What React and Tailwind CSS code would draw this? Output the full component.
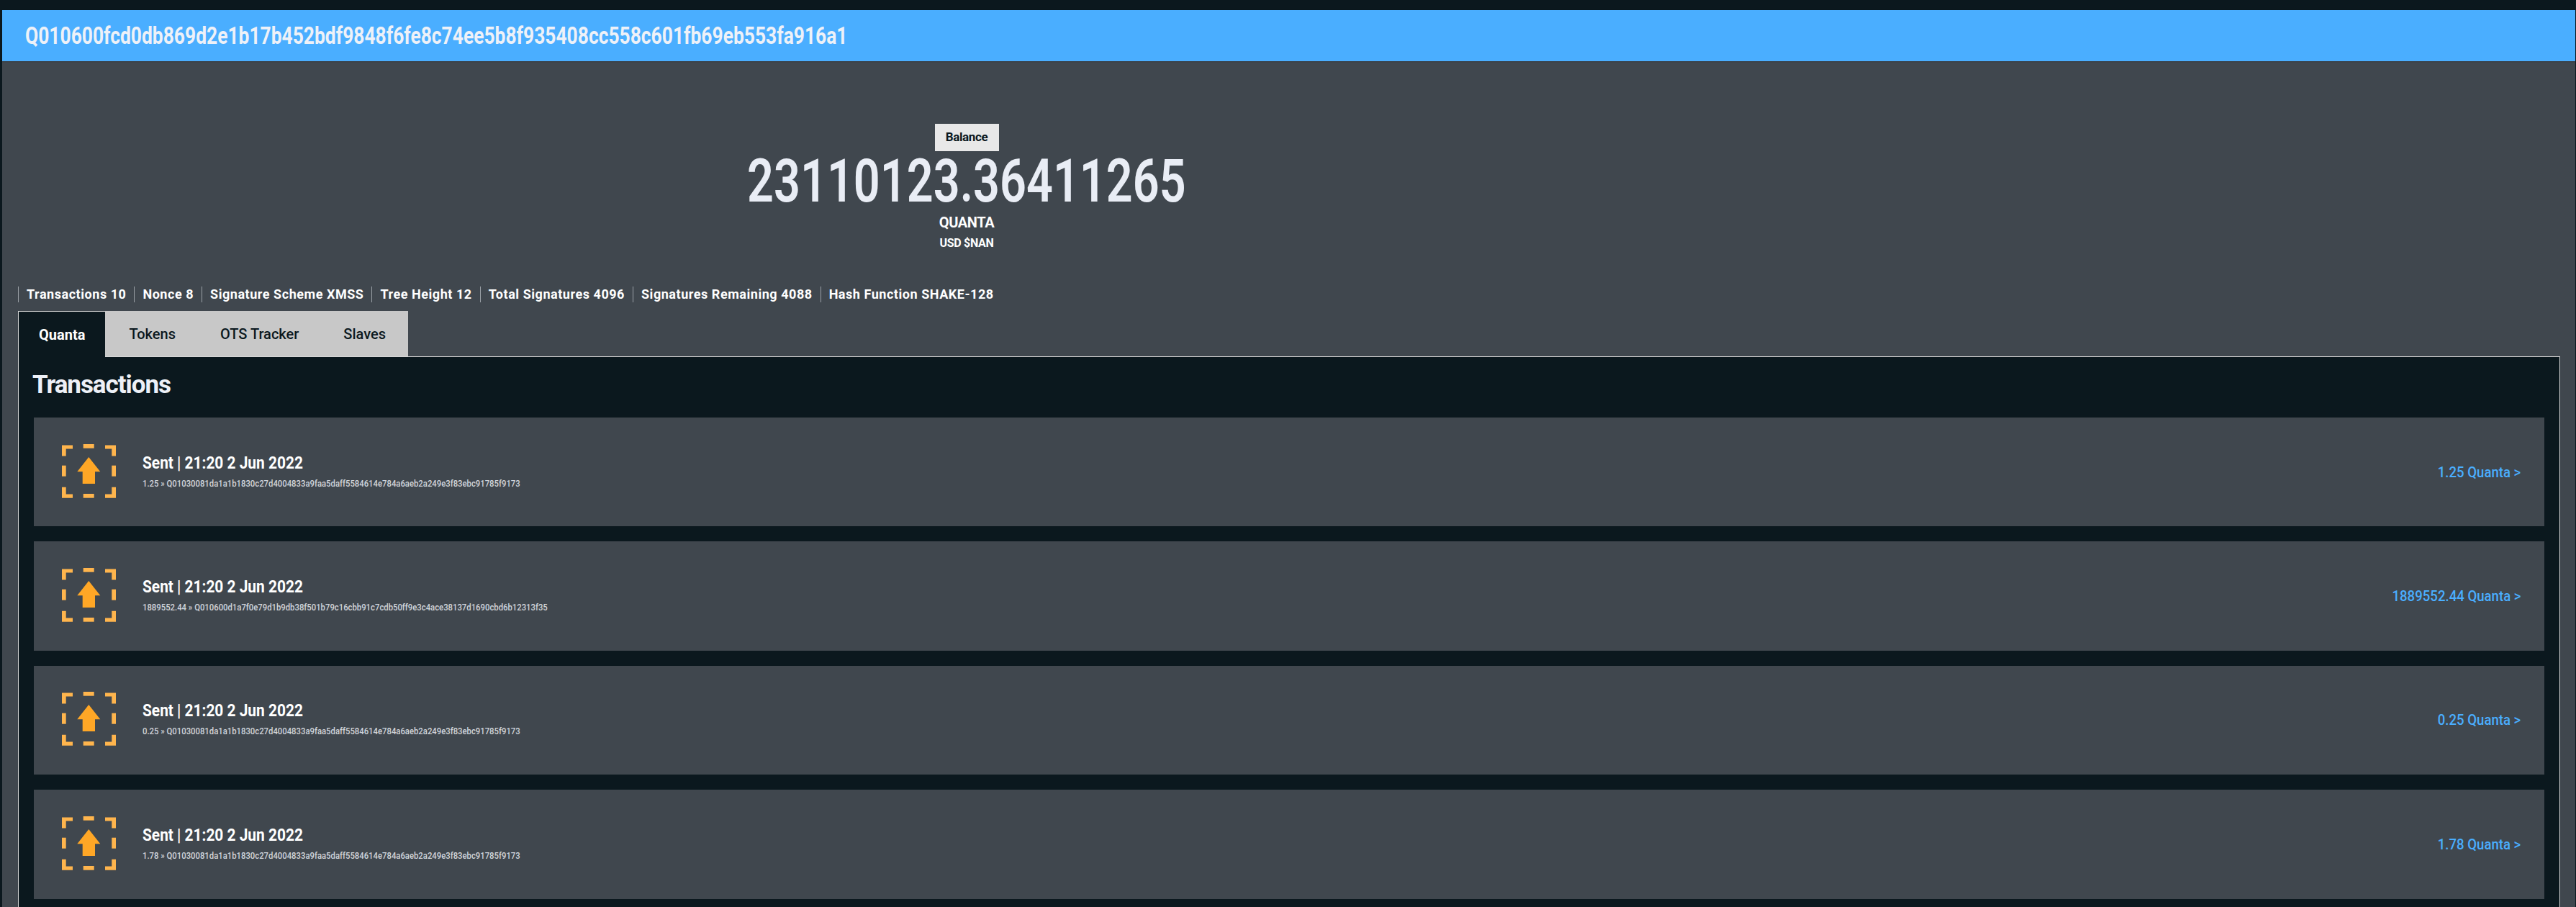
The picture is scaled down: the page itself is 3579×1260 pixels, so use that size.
const stats = [
  "Transactions 10",
  "Nonce 8",
  "Signature Scheme XMSS",
  "Tree Height 12",
  "Total Signatures 4096",
  "Signatures Remaining 4088",
  "Hash Function SHAKE-128",
];

const tabs = ["Tokens", "OTS Tracker", "Slaves"];

const transactions = [
  { amount: "1.25", to: "Q01030081da1a1b1830c27d4004833a9faa5daff5584614e784a6aeb2a249e3f83ebc91785f9173" },
  { amount: "1889552.44", to: "Q010600d1a7f0e79d1b9db38f501b79c16cbb91c7cdb50ff9e3c4ace38137d1690cbd6b12313f35" },
  { amount: "0.25", to: "Q01030081da1a1b1830c27d4004833a9faa5daff5584614e784a6aeb2a249e3f83ebc91785f9173" },
  { amount: "1.78", to: "Q01030081da1a1b1830c27d4004833a9faa5daff5584614e784a6aeb2a249e3f83ebc91785f9173" },
];

const SentIcon = () => (
  <svg width="75" height="75" viewBox="0 0 75 75" className="-mt-[3px] shrink-0">
    <g fill="#ffb54d">
      <path d="M0 1.5H15V6.5H5.7V16.5H0Z" />
      <path d="M75 1.5H60V6.5H69.3V16.5H75Z" />
      <path d="M0 59.7H5.7V69.5H15V74.7H0Z" />
      <path d="M75 59.7H69.3V69.5H60V74.7H75Z" />
      <rect x="29.7" y="0" width="15" height="5.7" />
      <rect x="29.7" y="69" width="15" height="5.7" />
      <rect x="0" y="29.7" width="5.7" height="15" />
      <rect x="69.3" y="29.7" width="5.7" height="15" />
    </g>
    <path d="M37.3 18L53.3 38.3H46V55H28.7V38.3H21.3Z" fill="#ffa726" />
  </svg>
);

const App = () => {
  return (
    <div className="h-[1260px] overflow-hidden bg-[#0b181e] pt-[14px] pl-[3px] pr-[1px] font-['Roboto',sans-serif] text-[#edf0f7]">
      <div className="h-full bg-[#40474e]">
        <header className="flex h-[71px] items-center bg-[#4aaeff] pl-[32px] shadow-[0_1px_2px_rgba(0,0,0,0.15)]">
          <h1 className="origin-left scale-x-[0.8] whitespace-nowrap text-[33px] font-bold text-[#eef1f8]">
            Q010600fcd0db869d2e1b17b452bdf9848f6fe8c74ee5b8f935408cc558c601fb69eb553fa916a1
          </h1>
        </header>

        <section className="flex h-[313px] w-[2680px] flex-col items-center pt-[87px]">
          <div className="flex h-[38px] w-[89px] items-center justify-center bg-[#e8e8e8] text-[17px] font-bold tracking-[-0.02em] text-[#0b181e]">
            Balance
          </div>
          <div className="h-[84px] scale-x-[0.77] whitespace-nowrap text-[84px] leading-[84px] font-semibold text-[#e9edf5]">
            23110123.36411265
          </div>
          <div className="mt-[3px] text-[20px] leading-[24px] font-bold tracking-[-0.02em] text-white">QUANTA</div>
          <div className="mt-[7px] text-[16px] leading-[20px] font-bold tracking-[-0.02em] text-white">USD $NAN</div>
        </section>

        <div className="ml-[22px] flex h-[22px] items-center text-[18px] font-bold tracking-[0.03em] text-white">
          {stats.map((stat) => (
            <span key={stat} className="whitespace-nowrap border-l border-[#9aa0a6] px-[11px] leading-[22px]">
              {stat}
            </span>
          ))}
        </div>

        <div className="relative z-10 mt-[12px] ml-[22px] flex h-[64px] w-fit text-[20px] -mb-px">
          <div className="flex items-center border-t border-l border-[#d8d8d8] bg-[#0b181e] px-[28px] font-bold text-white">
            Quanta
          </div>
          <div className="flex h-[63px] items-center bg-[#c8c8c8] pl-[33px] pr-[31px] font-medium text-[#0b181e]">
            {tabs.map((tab) => (
              <span key={tab} className="mr-[62px] whitespace-nowrap last:mr-0">
                {tab}
              </span>
            ))}
          </div>
        </div>

        <main className="ml-[22px] mr-[21px] h-[900px] border border-[#d8d8d8] bg-[#0b181e] px-[21px]">
          <h2 className="-ml-[2px] pt-[17px] pb-[24px] text-[35px] leading-[43px] font-bold tracking-[-0.03em] text-[#edf0f7]">
            Transactions
          </h2>
          {transactions.map((tx, i) => (
            <div key={i} className="mb-[21px] flex h-[151.4px] items-center bg-[#40474e] pl-[39px] pr-[33px]">
              <SentIcon />
              <div className="ml-[37px] -mt-[4px]">
                <div className="origin-left scale-x-[0.87] whitespace-nowrap text-[24px] leading-[30px] font-bold text-white">
                  Sent | 21:20 2 Jun 2022
                </div>
                <div className="mt-[6px] origin-left scale-x-[0.87] whitespace-nowrap text-[13px] leading-[16px] font-medium text-[#d0d4da]">
                  {tx.amount} » {tx.to}
                </div>
              </div>
              <div className="ml-auto origin-right scale-x-[0.93] whitespace-nowrap text-[20px] font-medium text-[#4aaeff]">
                {tx.amount} Quanta &gt;
              </div>
            </div>
          ))}
        </main>
      </div>
    </div>
  );
};

export default App;
